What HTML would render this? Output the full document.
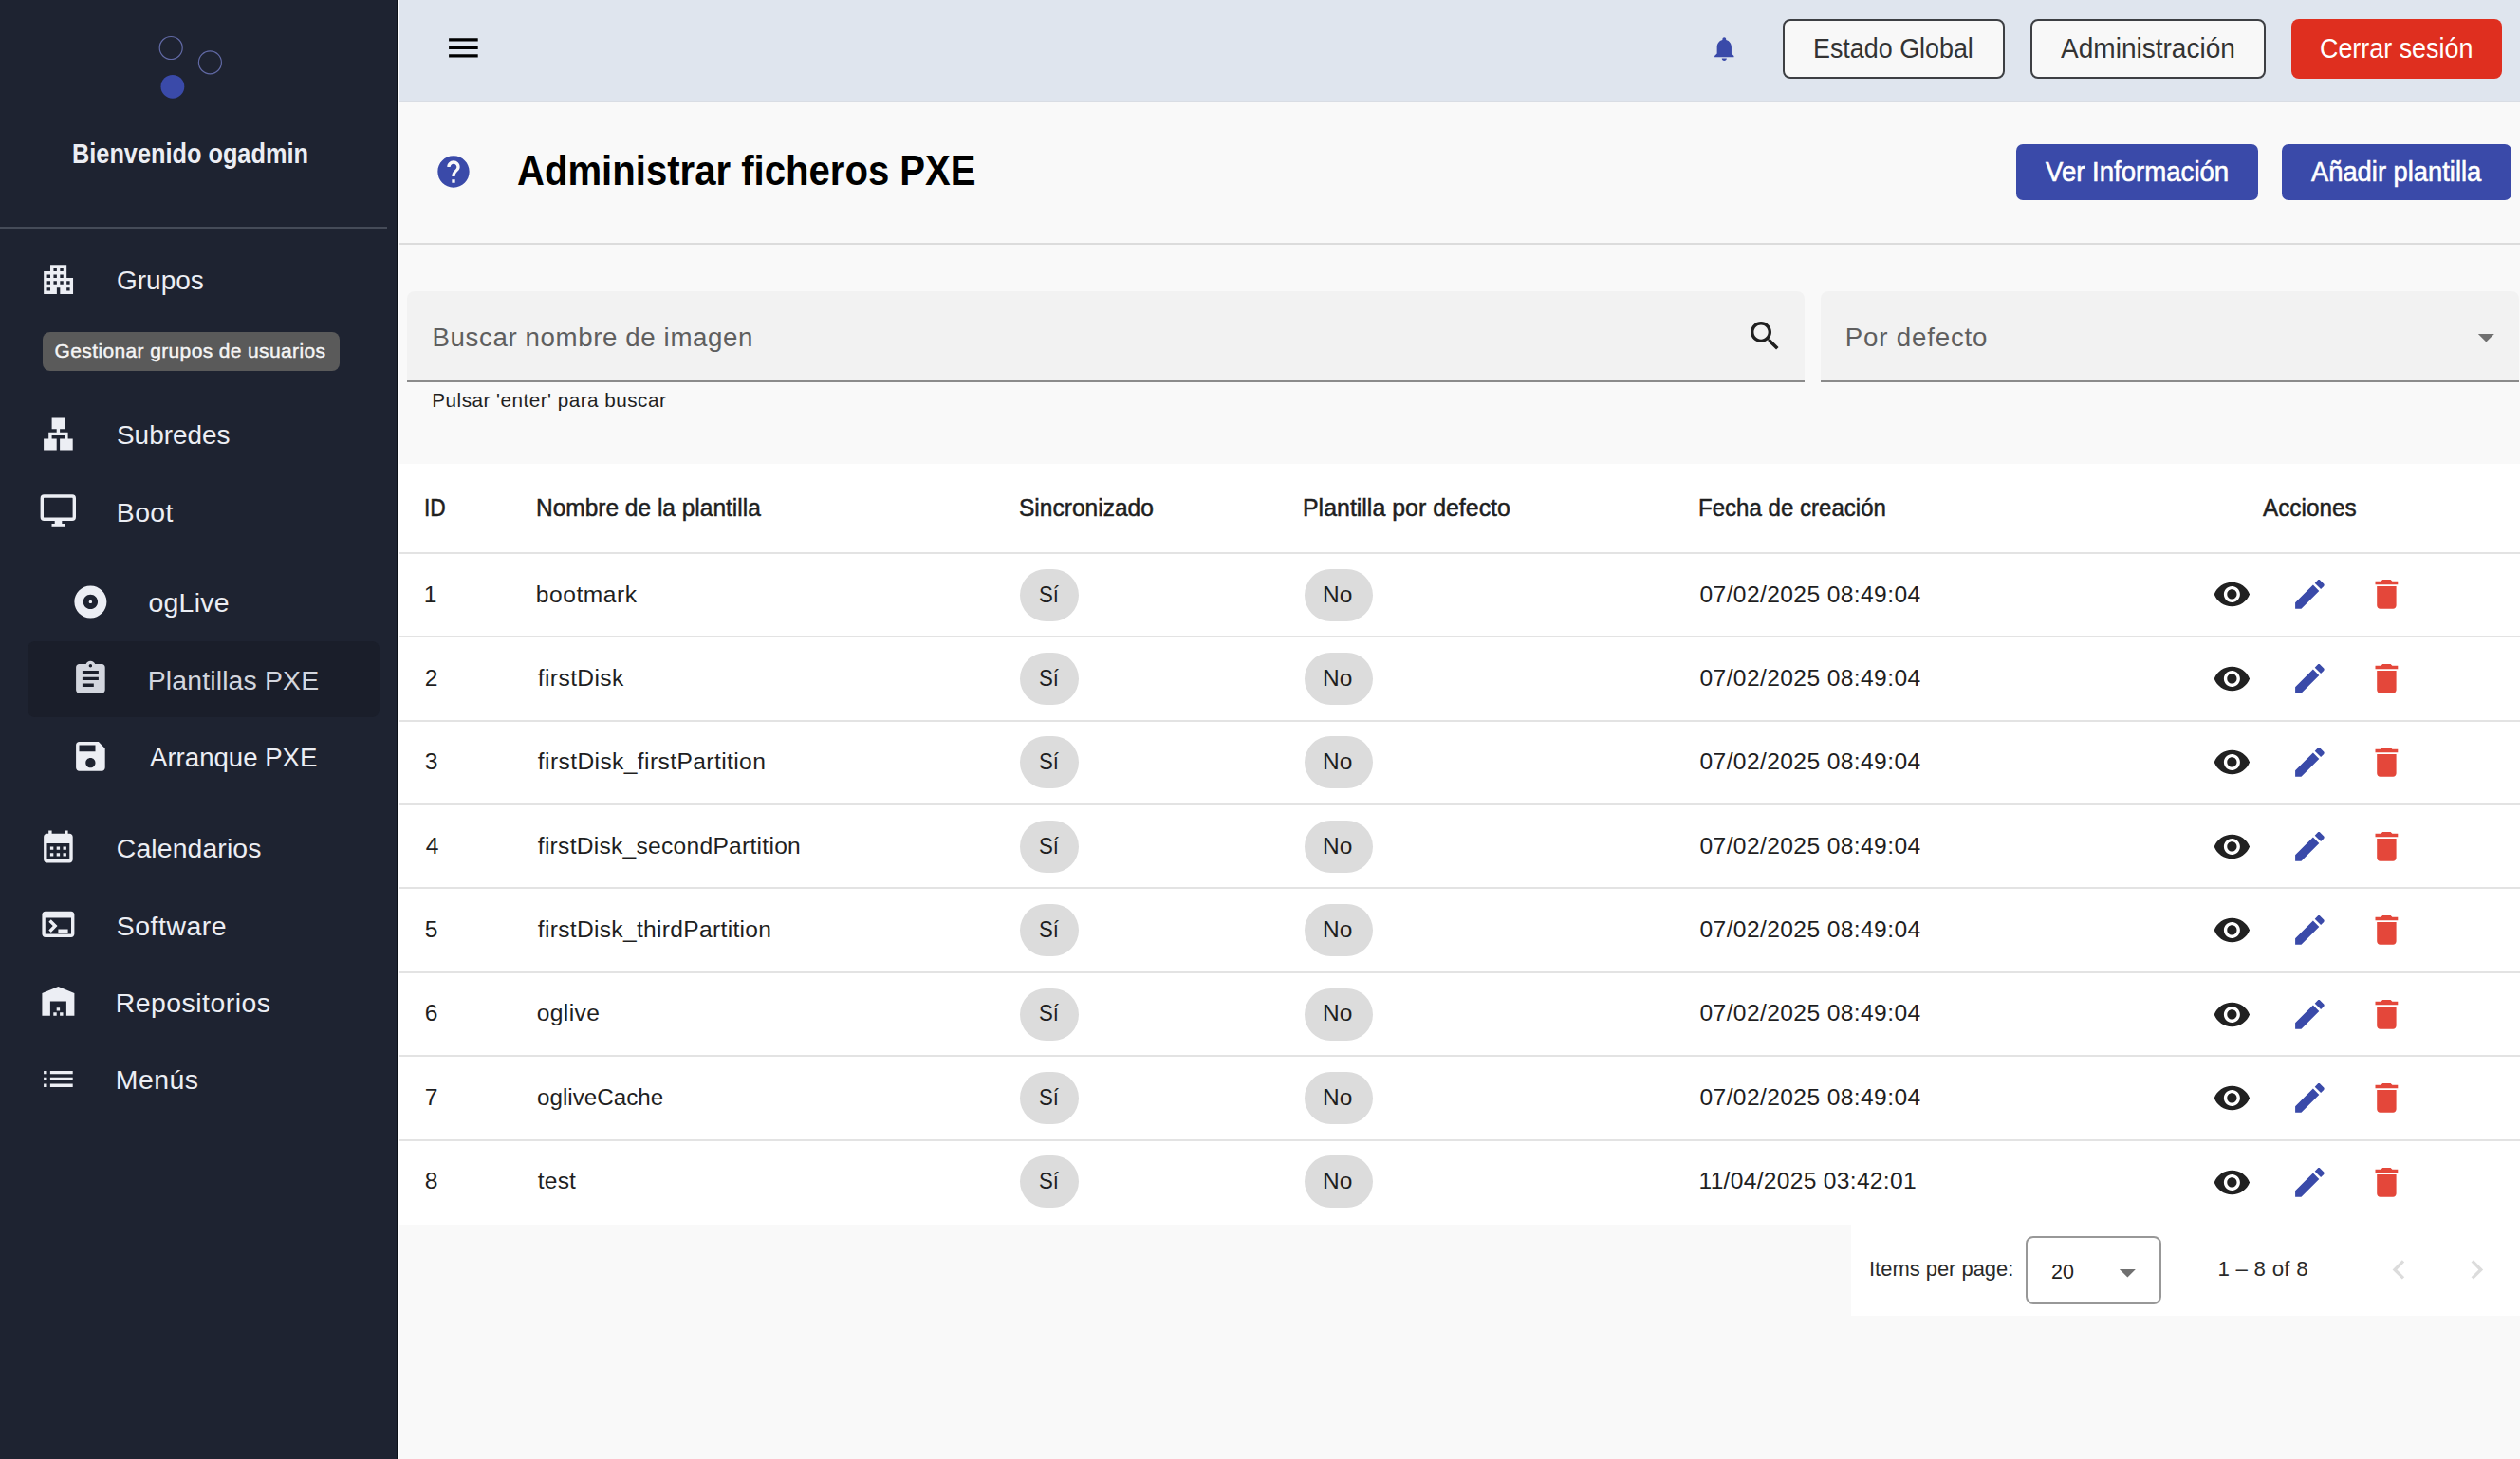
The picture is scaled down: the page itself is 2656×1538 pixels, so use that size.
<!DOCTYPE html><html><head><meta charset="utf-8"><style>
html,body{margin:0;padding:0;width:2656px;height:1538px;overflow:hidden;position:relative;font-family:"Liberation Sans",sans-serif}
.t{position:absolute;white-space:nowrap;transform-origin:0 0}
svg.i{position:absolute}
</style></head><body>
<div style="position:absolute;left:0px;top:0px;width:2656px;height:1538px;background:#f9f9f9"></div>
<div style="position:absolute;left:0px;top:0px;width:419px;height:1538px;background:#1e2331"></div>
<div style="position:absolute;left:418px;top:0px;width:1px;height:1538px;background:#0c1119"></div>
<div style="position:absolute;left:419px;top:0px;width:2px;height:1538px;background:#ffffff"></div>
<div style="position:absolute;left:421px;top:0px;width:2235px;height:107px;background:#dfe5ee"></div>
<div style="position:absolute;left:421px;top:106px;width:2235px;height:1px;background:#d9dde4"></div>
<div style="position:absolute;left:0px;top:239px;width:408px;height:2px;background:#454b58"></div>
<div style="position:absolute;left:29px;top:676px;width:371px;height:80px;background:#1a1e2a;border-radius:8px"></div>
<div style="position:absolute;left:45px;top:350px;width:313px;height:41px;background:#5a5a5a;border-radius:8px"></div>
<svg style="position:absolute;left:150px;top:30px" width="100" height="90" viewBox="150 30 100 90">
<circle cx="180.2" cy="50.5" r="12.0" fill="none" stroke="#626aa6" stroke-width="1.2"/>
<circle cx="221.4" cy="65.8" r="12.0" fill="none" stroke="#626aa6" stroke-width="1.2"/>
<circle cx="181.9" cy="91.3" r="12.4" fill="#3a4aa9"/>
</svg>
<svg style="position:absolute;left:0;top:500px" width="100" height="70" viewBox="0 500 100 70">
<rect x="44.3" y="523.0" width="34.0" height="24.2" rx="2.2" fill="none" stroke="#eceef4" stroke-width="3.4"/>
<rect x="57.7" y="548" width="7.6" height="5" fill="#eceef4"/>
<rect x="54.5" y="552" width="13.6" height="3.8" fill="#eceef4"/>
</svg>
<div style="position:absolute;left:1879px;top:20px;width:234px;height:63px;box-sizing:border-box;border:2px solid #3d3f43;border-radius:8px;background:#f8f8f8"></div>
<div style="position:absolute;left:2140px;top:20px;width:248px;height:63px;box-sizing:border-box;border:2px solid #3d3f43;border-radius:8px;background:#f8f8f8"></div>
<div style="position:absolute;left:2415px;top:20px;width:222px;height:63px;border-radius:8px;background:#df2f1f"></div>
<div style="position:absolute;left:2125px;top:152px;width:255px;height:59px;border-radius:7px;background:#3a4aa9"></div>
<div style="position:absolute;left:2405px;top:152px;width:242px;height:59px;border-radius:7px;background:#3a4aa9"></div>
<div style="position:absolute;left:421px;top:256px;width:2235px;height:2px;background:#dcdcdc"></div>
<div style="position:absolute;left:429px;top:307px;width:1473px;height:95px;background:#f2f2f2;border-radius:8px 8px 0 0"></div>
<div style="position:absolute;left:429px;top:401px;width:1473px;height:2px;background:#8b8b8b"></div>
<div style="position:absolute;left:1919px;top:307px;width:736px;height:95px;background:#f2f2f2;border-radius:8px 8px 0 0"></div>
<div style="position:absolute;left:1919px;top:401px;width:736px;height:2px;background:#8b8b8b"></div>
<div style="position:absolute;left:421px;top:489px;width:2235px;height:802px;background:#ffffff"></div>
<div style="position:absolute;left:421px;top:582px;width:2235px;height:2px;background:#e3e3e3"></div>
<div style="position:absolute;left:421px;top:670px;width:2235px;height:2px;background:#e3e3e3"></div>
<div style="position:absolute;left:421px;top:759px;width:2235px;height:2px;background:#e3e3e3"></div>
<div style="position:absolute;left:421px;top:847px;width:2235px;height:2px;background:#e3e3e3"></div>
<div style="position:absolute;left:421px;top:935px;width:2235px;height:2px;background:#e3e3e3"></div>
<div style="position:absolute;left:421px;top:1024px;width:2235px;height:2px;background:#e3e3e3"></div>
<div style="position:absolute;left:421px;top:1112px;width:2235px;height:2px;background:#e3e3e3"></div>
<div style="position:absolute;left:421px;top:1201px;width:2235px;height:2px;background:#e3e3e3"></div>
<div style="position:absolute;left:1951px;top:1291px;width:705px;height:96px;background:#ffffff"></div>
<div style="position:absolute;left:2135px;top:1303px;width:143px;height:72px;box-sizing:border-box;border:2px solid #989898;border-radius:8px"></div>
<div style="position:absolute;left:1075px;top:599.7px;width:62px;height:55px;background:#dcdcdc;border-radius:28px"></div>
<div style="position:absolute;left:1375px;top:599.7px;width:72px;height:55px;background:#dcdcdc;border-radius:28px"></div>
<div style="position:absolute;left:1075px;top:688.07px;width:62px;height:55px;background:#dcdcdc;border-radius:28px"></div>
<div style="position:absolute;left:1375px;top:688.07px;width:72px;height:55px;background:#dcdcdc;border-radius:28px"></div>
<div style="position:absolute;left:1075px;top:776.44px;width:62px;height:55px;background:#dcdcdc;border-radius:28px"></div>
<div style="position:absolute;left:1375px;top:776.44px;width:72px;height:55px;background:#dcdcdc;border-radius:28px"></div>
<div style="position:absolute;left:1075px;top:864.8100000000001px;width:62px;height:55px;background:#dcdcdc;border-radius:28px"></div>
<div style="position:absolute;left:1375px;top:864.8100000000001px;width:72px;height:55px;background:#dcdcdc;border-radius:28px"></div>
<div style="position:absolute;left:1075px;top:953.1800000000001px;width:62px;height:55px;background:#dcdcdc;border-radius:28px"></div>
<div style="position:absolute;left:1375px;top:953.1800000000001px;width:72px;height:55px;background:#dcdcdc;border-radius:28px"></div>
<div style="position:absolute;left:1075px;top:1041.5500000000002px;width:62px;height:55px;background:#dcdcdc;border-radius:28px"></div>
<div style="position:absolute;left:1375px;top:1041.5500000000002px;width:72px;height:55px;background:#dcdcdc;border-radius:28px"></div>
<div style="position:absolute;left:1075px;top:1129.92px;width:62px;height:55px;background:#dcdcdc;border-radius:28px"></div>
<div style="position:absolute;left:1375px;top:1129.92px;width:72px;height:55px;background:#dcdcdc;border-radius:28px"></div>
<div style="position:absolute;left:1075px;top:1218.29px;width:62px;height:55px;background:#dcdcdc;border-radius:28px"></div>
<div style="position:absolute;left:1375px;top:1218.29px;width:72px;height:55px;background:#dcdcdc;border-radius:28px"></div>
<svg class="i" style="left:467.7px;top:29.9px" width="40.8" height="40.8" viewBox="0 0 24 24"><path fill="#000000" d="M3 18h18v-2H3v2zm0-5h18v-2H3v2zm0-7v2h18V6H3z"/></svg>
<svg class="i" style="left:1802.4px;top:35.7px" width="30.6" height="30.6" viewBox="0 0 24 24"><path fill="#3a4aa9" d="M12 22c1.1 0 2-.9 2-2h-4c0 1.1.89 2 2 2zm6-6v-5c0-3.07-1.64-5.64-4.5-6.32V4c0-.83-.67-1.5-1.5-1.5s-1.5.67-1.5 1.5v.68C7.63 5.36 6 7.92 6 11v5l-2 2v1h16v-1l-2-2z"/></svg>
<svg class="i" style="left:458.4px;top:160.6px" width="40" height="40" viewBox="0 0 24 24"><path fill="#3a4aa9" d="M12 2C6.48 2 2 6.48 2 12s4.480 10 10 10 10-4.48 10-10S17.52 2 12 2zm1 17h-2v-2h2v2zm2.07-7.75l-.9.92C13.45 12.9 13 13.5 13 15h-2v-.5c0-1.1.45-2.1 1.17-2.83l1.240-1.26c.37-.36.59-.86.59-1.41 0-1.1-.9-2-2-2s-2 .9-2 2H8c0-2.21 1.79-4 4-4s4 1.79 4 4c0 .88-.36 1.68-.93 2.25z"/></svg>
<svg class="i" style="left:1839.9px;top:333.8px" width="40.5" height="40.5" viewBox="0 0 24 24"><path fill="#1f1f1f" d="M15.5 14h-.79l-.28-.27C15.41 12.59 16 11.11 16 9.5 16 5.910 13.09 3 9.5 3S3 5.91 3 9.5 5.91 16 9.5 16c1.61 0 3.09-.59 4.23-1.57l.27.28v.79l5 4.99L20.49 19l-4.99-5zm-6 0C7.01 14 5 11.99 5 9.5S7.01 5 9.5 5 14 7.01 14 9.5 11.99 14 9.5 14z"/></svg>
<svg class="i" style="left:2599.6px;top:335.4px" width="40.8" height="40.8" viewBox="0 0 24 24"><path fill="#707070" d="M7 10l5 5 5-5z"/></svg>
<svg class="i" style="left:2221.6px;top:1320.7px" width="40.8" height="40.8" viewBox="0 0 24 24"><path fill="#707070" d="M7 10l5 5 5-5z"/></svg>
<svg class="i" style="left:2507.6px;top:1318.0px" width="40.8" height="40.8" viewBox="0 0 24 24"><path fill="#dcdcdc" d="M15.41 7.41L14 6l-6 6 6 6 1.41-1.41L10.83 12z"/></svg>
<svg class="i" style="left:2589.6px;top:1318.0px" width="40.8" height="40.8" viewBox="0 0 24 24"><path fill="#dcdcdc" d="M10 6L8.59 7.41 13.17 12l-4.58 4.59L10 18l6-6z"/></svg>
<svg class="i" style="left:2332.0px;top:606.0px" width="40.8" height="40.8" viewBox="0 0 24 24"><path fill="#212121" d="M12 4.5C7 4.5 2.73 7.61 1 12c1.73 4.39 6 7.5 11 7.5s9.27-3.11 11-7.5c-1.73-4.39-6-7.5-11-7.5zM12 17c-2.76 0-5-2.24-5-5s2.24-5 5-5 5 2.24 5 5-2.24 5-5 5zm0-8c-1.66 0-3 1.34-3 3s1.34 3 3 3 3-1.34 3-3-1.34-3-3-3z"/></svg>
<svg class="i" style="left:2413.6px;top:606.0px" width="40.8" height="40.8" viewBox="0 0 24 24"><path fill="#3a4aa9" d="M3 17.25V21h3.75L17.81 9.94l-3.75-3.75L3 17.25zM20.71 7.04c.39-.39.39-1.02 0-1.41l-2.34-2.34c-.39-.39-1.02-.39-1.41 0l-1.83 1.830 3.75 3.75 1.83-1.83z"/></svg>
<svg class="i" style="left:2494.6px;top:606.0px" width="40.8" height="40.8" viewBox="0 0 24 24"><path fill="#e4473a" d="M6 19c0 1.1.9 2 2 2h8c1.1 0 2-.9 2-2V7H6v12zM19 4h-3.5l-1-1h-5l-1 1H5v2h14V4z"/></svg>
<svg class="i" style="left:2332.0px;top:694.5px" width="40.8" height="40.8" viewBox="0 0 24 24"><path fill="#212121" d="M12 4.5C7 4.5 2.73 7.61 1 12c1.73 4.39 6 7.5 11 7.5s9.27-3.11 11-7.5c-1.73-4.39-6-7.5-11-7.5zM12 17c-2.76 0-5-2.24-5-5s2.24-5 5-5 5 2.24 5 5-2.24 5-5 5zm0-8c-1.66 0-3 1.34-3 3s1.34 3 3 3 3-1.34 3-3-1.34-3-3-3z"/></svg>
<svg class="i" style="left:2413.6px;top:694.5px" width="40.8" height="40.8" viewBox="0 0 24 24"><path fill="#3a4aa9" d="M3 17.25V21h3.75L17.81 9.94l-3.75-3.75L3 17.25zM20.71 7.04c.39-.39.39-1.02 0-1.41l-2.34-2.34c-.39-.39-1.02-.39-1.41 0l-1.83 1.830 3.75 3.75 1.83-1.83z"/></svg>
<svg class="i" style="left:2494.6px;top:694.5px" width="40.8" height="40.8" viewBox="0 0 24 24"><path fill="#e4473a" d="M6 19c0 1.1.9 2 2 2h8c1.1 0 2-.9 2-2V7H6v12zM19 4h-3.5l-1-1h-5l-1 1H5v2h14V4z"/></svg>
<svg class="i" style="left:2332.0px;top:783.0px" width="40.8" height="40.8" viewBox="0 0 24 24"><path fill="#212121" d="M12 4.5C7 4.5 2.73 7.61 1 12c1.73 4.39 6 7.5 11 7.5s9.27-3.11 11-7.5c-1.73-4.39-6-7.5-11-7.5zM12 17c-2.76 0-5-2.24-5-5s2.24-5 5-5 5 2.24 5 5-2.24 5-5 5zm0-8c-1.66 0-3 1.34-3 3s1.34 3 3 3 3-1.34 3-3-1.34-3-3-3z"/></svg>
<svg class="i" style="left:2413.6px;top:783.0px" width="40.8" height="40.8" viewBox="0 0 24 24"><path fill="#3a4aa9" d="M3 17.25V21h3.75L17.81 9.94l-3.75-3.75L3 17.25zM20.71 7.04c.39-.39.39-1.02 0-1.41l-2.34-2.34c-.39-.39-1.02-.39-1.41 0l-1.83 1.830 3.75 3.75 1.83-1.83z"/></svg>
<svg class="i" style="left:2494.6px;top:783.0px" width="40.8" height="40.8" viewBox="0 0 24 24"><path fill="#e4473a" d="M6 19c0 1.1.9 2 2 2h8c1.1 0 2-.9 2-2V7H6v12zM19 4h-3.5l-1-1h-5l-1 1H5v2h14V4z"/></svg>
<svg class="i" style="left:2332.0px;top:871.6px" width="40.8" height="40.8" viewBox="0 0 24 24"><path fill="#212121" d="M12 4.5C7 4.5 2.73 7.61 1 12c1.73 4.39 6 7.5 11 7.5s9.27-3.11 11-7.5c-1.73-4.39-6-7.5-11-7.5zM12 17c-2.76 0-5-2.24-5-5s2.24-5 5-5 5 2.24 5 5-2.24 5-5 5zm0-8c-1.66 0-3 1.34-3 3s1.34 3 3 3 3-1.34 3-3-1.34-3-3-3z"/></svg>
<svg class="i" style="left:2413.6px;top:871.6px" width="40.8" height="40.8" viewBox="0 0 24 24"><path fill="#3a4aa9" d="M3 17.25V21h3.75L17.81 9.94l-3.75-3.75L3 17.25zM20.71 7.04c.39-.39.39-1.02 0-1.41l-2.34-2.34c-.39-.39-1.02-.39-1.41 0l-1.83 1.830 3.75 3.75 1.83-1.83z"/></svg>
<svg class="i" style="left:2494.6px;top:871.6px" width="40.8" height="40.8" viewBox="0 0 24 24"><path fill="#e4473a" d="M6 19c0 1.1.9 2 2 2h8c1.1 0 2-.9 2-2V7H6v12zM19 4h-3.5l-1-1h-5l-1 1H5v2h14V4z"/></svg>
<svg class="i" style="left:2332.0px;top:960.1px" width="40.8" height="40.8" viewBox="0 0 24 24"><path fill="#212121" d="M12 4.5C7 4.5 2.73 7.61 1 12c1.73 4.39 6 7.5 11 7.5s9.27-3.11 11-7.5c-1.73-4.39-6-7.5-11-7.5zM12 17c-2.76 0-5-2.24-5-5s2.24-5 5-5 5 2.24 5 5-2.24 5-5 5zm0-8c-1.66 0-3 1.34-3 3s1.34 3 3 3 3-1.34 3-3-1.34-3-3-3z"/></svg>
<svg class="i" style="left:2413.6px;top:960.1px" width="40.8" height="40.8" viewBox="0 0 24 24"><path fill="#3a4aa9" d="M3 17.25V21h3.75L17.81 9.94l-3.75-3.75L3 17.25zM20.71 7.04c.39-.39.39-1.02 0-1.41l-2.34-2.34c-.39-.39-1.02-.39-1.41 0l-1.83 1.830 3.75 3.75 1.83-1.83z"/></svg>
<svg class="i" style="left:2494.6px;top:960.1px" width="40.8" height="40.8" viewBox="0 0 24 24"><path fill="#e4473a" d="M6 19c0 1.1.9 2 2 2h8c1.1 0 2-.9 2-2V7H6v12zM19 4h-3.5l-1-1h-5l-1 1H5v2h14V4z"/></svg>
<svg class="i" style="left:2332.0px;top:1048.6px" width="40.8" height="40.8" viewBox="0 0 24 24"><path fill="#212121" d="M12 4.5C7 4.5 2.73 7.61 1 12c1.73 4.39 6 7.5 11 7.5s9.27-3.11 11-7.5c-1.73-4.39-6-7.5-11-7.5zM12 17c-2.76 0-5-2.24-5-5s2.24-5 5-5 5 2.24 5 5-2.24 5-5 5zm0-8c-1.66 0-3 1.34-3 3s1.34 3 3 3 3-1.34 3-3-1.34-3-3-3z"/></svg>
<svg class="i" style="left:2413.6px;top:1048.6px" width="40.8" height="40.8" viewBox="0 0 24 24"><path fill="#3a4aa9" d="M3 17.25V21h3.75L17.81 9.94l-3.75-3.75L3 17.25zM20.71 7.04c.39-.39.39-1.02 0-1.41l-2.34-2.34c-.39-.39-1.02-.39-1.41 0l-1.83 1.830 3.75 3.75 1.83-1.83z"/></svg>
<svg class="i" style="left:2494.6px;top:1048.6px" width="40.8" height="40.8" viewBox="0 0 24 24"><path fill="#e4473a" d="M6 19c0 1.1.9 2 2 2h8c1.1 0 2-.9 2-2V7H6v12zM19 4h-3.5l-1-1h-5l-1 1H5v2h14V4z"/></svg>
<svg class="i" style="left:2332.0px;top:1137.1px" width="40.8" height="40.8" viewBox="0 0 24 24"><path fill="#212121" d="M12 4.5C7 4.5 2.73 7.61 1 12c1.73 4.39 6 7.5 11 7.5s9.27-3.11 11-7.5c-1.73-4.39-6-7.5-11-7.5zM12 17c-2.76 0-5-2.24-5-5s2.24-5 5-5 5 2.24 5 5-2.24 5-5 5zm0-8c-1.66 0-3 1.34-3 3s1.34 3 3 3 3-1.34 3-3-1.34-3-3-3z"/></svg>
<svg class="i" style="left:2413.6px;top:1137.1px" width="40.8" height="40.8" viewBox="0 0 24 24"><path fill="#3a4aa9" d="M3 17.25V21h3.75L17.81 9.94l-3.75-3.75L3 17.25zM20.71 7.04c.39-.39.39-1.02 0-1.41l-2.34-2.34c-.39-.39-1.02-.39-1.41 0l-1.83 1.830 3.75 3.75 1.83-1.83z"/></svg>
<svg class="i" style="left:2494.6px;top:1137.1px" width="40.8" height="40.8" viewBox="0 0 24 24"><path fill="#e4473a" d="M6 19c0 1.1.9 2 2 2h8c1.1 0 2-.9 2-2V7H6v12zM19 4h-3.5l-1-1h-5l-1 1H5v2h14V4z"/></svg>
<svg class="i" style="left:2332.0px;top:1225.6px" width="40.8" height="40.8" viewBox="0 0 24 24"><path fill="#212121" d="M12 4.5C7 4.5 2.73 7.61 1 12c1.73 4.39 6 7.5 11 7.5s9.27-3.11 11-7.5c-1.73-4.39-6-7.5-11-7.5zM12 17c-2.76 0-5-2.24-5-5s2.24-5 5-5 5 2.24 5 5-2.24 5-5 5zm0-8c-1.66 0-3 1.34-3 3s1.34 3 3 3 3-1.34 3-3-1.34-3-3-3z"/></svg>
<svg class="i" style="left:2413.6px;top:1225.6px" width="40.8" height="40.8" viewBox="0 0 24 24"><path fill="#3a4aa9" d="M3 17.25V21h3.75L17.81 9.94l-3.75-3.75L3 17.25zM20.71 7.04c.39-.39.39-1.02 0-1.41l-2.34-2.34c-.39-.39-1.02-.39-1.41 0l-1.83 1.830 3.75 3.75 1.83-1.83z"/></svg>
<svg class="i" style="left:2494.6px;top:1225.6px" width="40.8" height="40.8" viewBox="0 0 24 24"><path fill="#e4473a" d="M6 19c0 1.1.9 2 2 2h8c1.1 0 2-.9 2-2V7H6v12zM19 4h-3.5l-1-1h-5l-1 1H5v2h14V4z"/></svg>
<svg class="i" style="left:40.8px;top:273.8px" width="41.2" height="41.2" viewBox="0 0 24 24"><path fill="#eceef4" d="M17 11V3H7v4H3v14h8v-4h2v4h8V11h-4zM7 19H5v-2h2v2zm0-4H5v-2h2v2zm0-4H5V9h2v2zm4 4H9v-2h2v2zm0-4H9V9h2v2zm0-4H9V5h2v2zm4 8h-2v-2h2v2zm0-4h-2V9h2v2zm0-4h-2V5h2v2zm4 12h-2v-2h2v2zm0-4h-2v-2h2v2z"/></svg>
<svg class="i" style="left:40.9px;top:436.9px" width="40.8" height="40.8" viewBox="0 0 24 24"><path fill="#eceef4" d="M13 22h8v-7h-3v-4h-5V9h3V2H8v7h3v2H6v4H3v7h8v-7H8v-2h8v2h-3z"/></svg>
<svg class="i" style="left:74.9px;top:613.9px" width="40.8" height="40.8" viewBox="0 0 24 24"><path fill="#eceef4" d="M12 2C6.48 2 2 6.48 2 12s4.48 10 10 10 10-4.48 10-10S17.52 2 12 2zm0 14.5c-2.49 0-4.5-2.01-4.5-4.5S9.51 7.5 12 7.5s4.5 2.01 4.5 4.5-2.01 4.5-4.5 4.5zm0-5.5c-.55 0-1 .45-1 1s.45 1 1 1 1-.45 1-1-.45-1-1-1z"/></svg>
<svg class="i" style="left:74.9px;top:694.8px" width="40.8" height="40.8" viewBox="0 0 24 24"><path fill="#d3d6de" d="M19 3h-4.18C14.4 1.84 13.3 1 12 1c-1.3 0-2.4.84-2.82 2H5c-1.1 0-2 .9-2 2v14c0 1.1.9 2 2 2h14c1.1 0 2-.9 2-2V5c0-1.1-.9-2-2-2zm-7 0c.55 0 1 .45 1 1s-.45 1-1 1-1-.45-1-1 .45-1 1-1zm2 14H7v-2h7v2zm3-4H7v-2h10v2zm0-4H7V7h10v2z"/></svg>
<svg class="i" style="left:74.9px;top:776.9px" width="40.8" height="40.8" viewBox="0 0 24 24"><path fill="#eceef4" d="M17 3H5c-1.11 0-2 .9-2 2v14c0 1.1.89 2 2 2h14c1.1 0 2-.9 2-2V7l-4-4zm-5 16c-1.66 0-3-1.34-3-3s1.34-3 3-3 3 1.34 3 3-1.34 3-3 3zm3-10H5V5h10v4z"/></svg>
<svg class="i" style="left:40.9px;top:872.2px" width="40.8" height="40.8" viewBox="0 0 24 24"><path fill="#eceef4" d="M19 4h-1V2h-2v2H8V2H6v2H5c-1.11 0-1.99.9-1.99 2L3 20c0 1.1.89 2 2 2h14c1.1 0 2-.9 2-2V6c0-1.1-.9-2-2-2zm0 16H5V10h14v10zM9 14H7v-2h2v2zm4 0h-2v-2h2v2zm4 0h-2v-2h2v2zm-8 4H7v-2h2v2zm4 0h-2v-2h2v2zm4 0h-2v-2h2v2z"/></svg>
<svg class="i" style="left:40.6px;top:954.2px" width="40.8" height="40.8" viewBox="0 0 24 24"><path fill="#eceef4" d="M20 4H4c-1.11 0-2 .9-2 2v12c0 1.1.89 2 2 2h16c1.1 0 2-.89 2-2V6c0-1.1-.89-2-2-2zm0 14H4V8h16v10zm-2-1h-6v-2h6v2zM7.5 17l-1.41-1.41L8.67 13l-2.59-2.59L7.5 9l4 4-4 4z"/></svg>
<svg class="i" style="left:40.6px;top:1035.1px" width="40.8" height="40.8" viewBox="0 0 24 24"><path fill="#eceef4" d="M22 21V7L12 3 2 7v14h5v-9h10v9h5zm-11-2H9v2h2v-2zm2-3h-2v2h2v-2zm2 3h-2v2h2v-2z"/></svg>
<svg class="i" style="left:40.9px;top:1117.0px" width="40.8" height="40.8" viewBox="0 0 24 24"><path fill="#eceef4" d="M3 13h2v-2H3v2zm0 4h2v-2H3v2zm0-8h2V7H3v2zm4 4h14v-2H7v2zm0 4h14v-2H7v2zM7 7v2h14V7H7z"/></svg>
<div class="t" id="welcome" style="left:76.1px;top:147.8px;font-size:29px;line-height:29px;color:#eceef4;font-weight:700;transform:scaleX(0.8727);">Bienvenido ogadmin</div>
<div class="t" id="grupos" style="left:122.9px;top:281.0px;font-size:28.4px;line-height:28.4px;color:#eceef4;transform:scaleX(0.9868);">Grupos</div>
<div class="t" id="tooltip" style="left:57.6px;top:358.8px;font-size:21px;line-height:21px;color:#f5f5f5;-webkit-text-stroke:0.42px #f5f5f5;letter-spacing:0.367px;">Gestionar grupos de usuarios</div>
<div class="t" id="subredes" style="left:122.8px;top:444.2px;font-size:28.4px;line-height:28.4px;color:#eceef4;transform:scaleX(0.9833);">Subredes</div>
<div class="t" id="boot" style="left:122.8px;top:526.0px;font-size:28.4px;line-height:28.4px;color:#eceef4;letter-spacing:0.400px;">Boot</div>
<div class="t" id="oglive" style="left:156.5px;top:620.7px;font-size:28.4px;line-height:28.4px;color:#eceef4;letter-spacing:0.260px;">ogLive</div>
<div class="t" id="plant" style="left:155.7px;top:703.3px;font-size:28.4px;line-height:28.4px;color:#d3d6de;letter-spacing:0.162px;">Plantillas PXE</div>
<div class="t" id="arranque" style="left:157.5px;top:784.2px;font-size:28.4px;line-height:28.4px;color:#eceef4;transform:scaleX(0.9722);">Arranque PXE</div>
<div class="t" id="cal" style="left:122.8px;top:879.5px;font-size:28.4px;line-height:28.4px;color:#eceef4;letter-spacing:0.110px;">Calendarios</div>
<div class="t" id="soft" style="left:122.8px;top:961.5px;font-size:28.4px;line-height:28.4px;color:#eceef4;letter-spacing:0.529px;">Software</div>
<div class="t" id="repo" style="left:121.8px;top:1043.0px;font-size:28.4px;line-height:28.4px;color:#eceef4;letter-spacing:0.482px;">Repositorios</div>
<div class="t" id="menus" style="left:121.8px;top:1124.0px;font-size:28.4px;line-height:28.4px;color:#eceef4;letter-spacing:0.500px;">Menús</div>
<div class="t" id="estado" style="left:1911.1px;top:36.6px;font-size:28.8px;line-height:28.8px;color:#333333;transform:scaleX(0.9333);">Estado Global</div>
<div class="t" id="admin" style="left:2172.4px;top:36.6px;font-size:28.8px;line-height:28.8px;color:#333333;transform:scaleX(0.9738);">Administración</div>
<div class="t" id="cerrar" style="left:2445.4px;top:36.5px;font-size:28.8px;line-height:28.8px;color:#ffffff;transform:scaleX(0.9335);">Cerrar sesión</div>
<div class="t" id="title" style="left:545.1px;top:157.8px;font-size:44px;line-height:44px;color:#000000;font-weight:700;transform:scaleX(0.9114);">Administrar ficheros PXE</div>
<div class="t" id="verinfo" style="left:2155.5px;top:166.0px;font-size:30px;line-height:30px;color:#ffffff;-webkit-text-stroke:0.60px #ffffff;transform:scaleX(0.9196);">Ver Información</div>
<div class="t" id="anadir" style="left:2436.1px;top:166.0px;font-size:30px;line-height:30px;color:#ffffff;-webkit-text-stroke:0.60px #ffffff;transform:scaleX(0.9107);">Añadir plantilla</div>
<div class="t" id="buscar" style="left:455.5px;top:341.5px;font-size:27.7px;line-height:27.7px;color:#5f5f5f;letter-spacing:0.600px;">Buscar nombre de imagen</div>
<div class="t" id="pulsar" style="left:455.3px;top:412.3px;font-size:20.7px;line-height:20.7px;color:#1f1f1f;letter-spacing:0.484px;">Pulsar 'enter' para buscar</div>
<div class="t" id="pordef" style="left:1944.8px;top:341.6px;font-size:27.7px;line-height:27.7px;color:#5f5f5f;letter-spacing:0.810px;">Por defecto</div>
<div class="t" id="h_id" style="left:447.3px;top:523.2px;font-size:25.0px;line-height:25.0px;color:#1f1f1f;-webkit-text-stroke:0.50px #1f1f1f;transform:scaleX(0.9091);">ID</div>
<div class="t" id="h_name" style="left:565.1px;top:523.2px;font-size:25.0px;line-height:25.0px;color:#1f1f1f;-webkit-text-stroke:0.50px #1f1f1f;transform:scaleX(0.9792);">Nombre de la plantilla</div>
<div class="t" id="h_sync" style="left:1073.6px;top:523.2px;font-size:25.0px;line-height:25.0px;color:#1f1f1f;-webkit-text-stroke:0.50px #1f1f1f;transform:scaleX(0.9818);">Sincronizado</div>
<div class="t" id="h_def" style="left:1372.6px;top:523.2px;font-size:25.0px;line-height:25.0px;color:#1f1f1f;-webkit-text-stroke:0.50px #1f1f1f;transform:scaleX(0.9968);">Plantilla por defecto</div>
<div class="t" id="h_date" style="left:1790.1px;top:523.2px;font-size:25.0px;line-height:25.0px;color:#1f1f1f;-webkit-text-stroke:0.50px #1f1f1f;transform:scaleX(0.9621);">Fecha de creación</div>
<div class="t" id="h_act" style="left:2385.3px;top:523.2px;font-size:25.0px;line-height:25.0px;color:#1f1f1f;-webkit-text-stroke:0.50px #1f1f1f;transform:scaleX(0.9723);">Acciones</div>
<div class="t" id="id0" style="left:446.8px;top:614.5px;font-size:24.6px;line-height:24.6px;color:#1f1f1f;">1</div>
<div class="t" id="name0" style="left:564.8px;top:614.5px;font-size:24.6px;line-height:24.6px;color:#1f1f1f;letter-spacing:0.543px;">bootmark</div>
<div class="t" id="si0" style="left:1094.8px;top:614.5px;font-size:24.6px;line-height:24.6px;color:#1f1f1f;transform:scaleX(0.9045);">Sí</div>
<div class="t" id="no0" style="left:1393.7px;top:614.5px;font-size:24.6px;line-height:24.6px;color:#1f1f1f;transform:scaleX(0.9966);">No</div>
<div class="t" id="date0" style="left:1791.5px;top:614.5px;font-size:24.6px;line-height:24.6px;color:#1f1f1f;letter-spacing:0.389px;">07/02/2025 08:49:04</div>
<div class="t" id="id1" style="left:447.8px;top:702.8px;font-size:24.6px;line-height:24.6px;color:#1f1f1f;">2</div>
<div class="t" id="name1" style="left:566.8px;top:702.8px;font-size:24.6px;line-height:24.6px;color:#1f1f1f;letter-spacing:0.387px;">firstDisk</div>
<div class="t" id="si1" style="left:1094.8px;top:702.8px;font-size:24.6px;line-height:24.6px;color:#1f1f1f;transform:scaleX(0.9045);">Sí</div>
<div class="t" id="no1" style="left:1393.7px;top:702.8px;font-size:24.6px;line-height:24.6px;color:#1f1f1f;transform:scaleX(0.9966);">No</div>
<div class="t" id="date1" style="left:1791.5px;top:702.8px;font-size:24.6px;line-height:24.6px;color:#1f1f1f;letter-spacing:0.389px;">07/02/2025 08:49:04</div>
<div class="t" id="id2" style="left:447.8px;top:791.2px;font-size:24.6px;line-height:24.6px;color:#1f1f1f;">3</div>
<div class="t" id="name2" style="left:566.8px;top:791.2px;font-size:24.6px;line-height:24.6px;color:#1f1f1f;letter-spacing:0.396px;">firstDisk_firstPartition</div>
<div class="t" id="si2" style="left:1094.8px;top:791.2px;font-size:24.6px;line-height:24.6px;color:#1f1f1f;transform:scaleX(0.9045);">Sí</div>
<div class="t" id="no2" style="left:1393.7px;top:791.2px;font-size:24.6px;line-height:24.6px;color:#1f1f1f;transform:scaleX(0.9966);">No</div>
<div class="t" id="date2" style="left:1791.5px;top:791.2px;font-size:24.6px;line-height:24.6px;color:#1f1f1f;letter-spacing:0.389px;">07/02/2025 08:49:04</div>
<div class="t" id="id3" style="left:448.8px;top:879.6px;font-size:24.6px;line-height:24.6px;color:#1f1f1f;">4</div>
<div class="t" id="name3" style="left:566.8px;top:879.6px;font-size:24.6px;line-height:24.6px;color:#1f1f1f;letter-spacing:0.263px;">firstDisk_secondPartition</div>
<div class="t" id="si3" style="left:1094.8px;top:879.6px;font-size:24.6px;line-height:24.6px;color:#1f1f1f;transform:scaleX(0.9045);">Sí</div>
<div class="t" id="no3" style="left:1393.7px;top:879.6px;font-size:24.6px;line-height:24.6px;color:#1f1f1f;transform:scaleX(0.9966);">No</div>
<div class="t" id="date3" style="left:1791.5px;top:879.6px;font-size:24.6px;line-height:24.6px;color:#1f1f1f;letter-spacing:0.389px;">07/02/2025 08:49:04</div>
<div class="t" id="id4" style="left:447.8px;top:968.0px;font-size:24.6px;line-height:24.6px;color:#1f1f1f;">5</div>
<div class="t" id="name4" style="left:566.8px;top:968.0px;font-size:24.6px;line-height:24.6px;color:#1f1f1f;letter-spacing:0.304px;">firstDisk_thirdPartition</div>
<div class="t" id="si4" style="left:1094.8px;top:968.0px;font-size:24.6px;line-height:24.6px;color:#1f1f1f;transform:scaleX(0.9045);">Sí</div>
<div class="t" id="no4" style="left:1393.7px;top:968.0px;font-size:24.6px;line-height:24.6px;color:#1f1f1f;transform:scaleX(0.9966);">No</div>
<div class="t" id="date4" style="left:1791.5px;top:968.0px;font-size:24.6px;line-height:24.6px;color:#1f1f1f;letter-spacing:0.389px;">07/02/2025 08:49:04</div>
<div class="t" id="id5" style="left:447.8px;top:1056.3px;font-size:24.6px;line-height:24.6px;color:#1f1f1f;">6</div>
<div class="t" id="name5" style="left:565.8px;top:1056.3px;font-size:24.6px;line-height:24.6px;color:#1f1f1f;letter-spacing:0.360px;">oglive</div>
<div class="t" id="si5" style="left:1094.8px;top:1056.3px;font-size:24.6px;line-height:24.6px;color:#1f1f1f;transform:scaleX(0.9045);">Sí</div>
<div class="t" id="no5" style="left:1393.7px;top:1056.3px;font-size:24.6px;line-height:24.6px;color:#1f1f1f;transform:scaleX(0.9966);">No</div>
<div class="t" id="date5" style="left:1791.5px;top:1056.3px;font-size:24.6px;line-height:24.6px;color:#1f1f1f;letter-spacing:0.389px;">07/02/2025 08:49:04</div>
<div class="t" id="id6" style="left:447.8px;top:1144.7px;font-size:24.6px;line-height:24.6px;color:#1f1f1f;">7</div>
<div class="t" id="name6" style="left:565.8px;top:1144.7px;font-size:24.6px;line-height:24.6px;color:#1f1f1f;transform:scaleX(0.9843);">ogliveCache</div>
<div class="t" id="si6" style="left:1094.8px;top:1144.7px;font-size:24.6px;line-height:24.6px;color:#1f1f1f;transform:scaleX(0.9045);">Sí</div>
<div class="t" id="no6" style="left:1393.7px;top:1144.7px;font-size:24.6px;line-height:24.6px;color:#1f1f1f;transform:scaleX(0.9966);">No</div>
<div class="t" id="date6" style="left:1791.5px;top:1144.7px;font-size:24.6px;line-height:24.6px;color:#1f1f1f;letter-spacing:0.389px;">07/02/2025 08:49:04</div>
<div class="t" id="id7" style="left:447.8px;top:1233.1px;font-size:24.6px;line-height:24.6px;color:#1f1f1f;">8</div>
<div class="t" id="name7" style="left:566.8px;top:1233.1px;font-size:24.6px;line-height:24.6px;color:#1f1f1f;letter-spacing:0.167px;">test</div>
<div class="t" id="si7" style="left:1094.8px;top:1233.1px;font-size:24.6px;line-height:24.6px;color:#1f1f1f;transform:scaleX(0.9045);">Sí</div>
<div class="t" id="no7" style="left:1393.7px;top:1233.1px;font-size:24.6px;line-height:24.6px;color:#1f1f1f;transform:scaleX(0.9966);">No</div>
<div class="t" id="date7" style="left:1790.5px;top:1233.1px;font-size:24.6px;line-height:24.6px;color:#1f1f1f;letter-spacing:0.294px;">11/04/2025 03:42:01</div>
<div class="t" id="ipp" style="left:1970.0px;top:1326.7px;font-size:22.3px;line-height:22.3px;color:#2a2a2a;transform:scaleX(0.9834);">Items per page:</div>
<div class="t" id="twenty" style="left:2162.2px;top:1329.7px;font-size:21.6px;line-height:21.6px;color:#1f1f1f;transform:scaleX(0.9955);">20</div>
<div class="t" id="range" style="left:2337.5px;top:1326.7px;font-size:22.3px;line-height:22.3px;color:#2a2a2a;letter-spacing:0.233px;">1 – 8 of 8</div>
</body></html>
